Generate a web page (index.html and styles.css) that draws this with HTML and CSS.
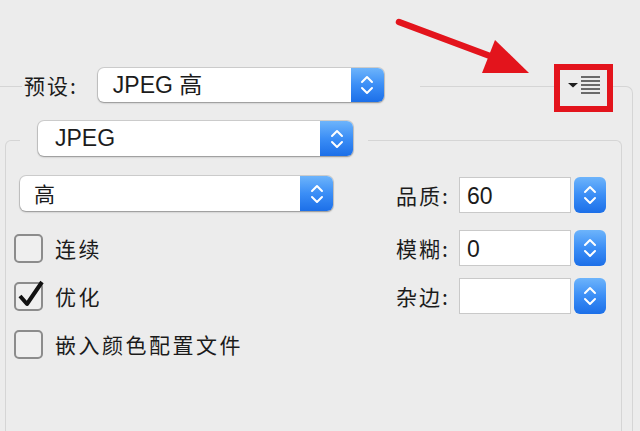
FILE: index.html
```html
<!DOCTYPE html>
<html lang="zh-CN">
<head>
    <meta charset="UTF-8">
    <meta name="viewport" content="width=device-width, initial-scale=1.0">
    <title>存储为 Web 所用格式</title>
    <link rel="stylesheet" href="styles.css">
</head>
<body>
    <div class="window">
        <div class="outer">
            <div class="preset-row">
                <span class="label">预设:</span>
                <div class="popup-wrap">
                    <div class="popup popup-preset">
                        <span class="popup-text">JPEG 高</span>
                        <span class="stepper">
                            <svg width="14" height="22" viewBox="0 0 14 22"><path d="M2 8 L7 3 L12 8 M2 14 L7 19 L12 14" fill="none" stroke="#fff" stroke-width="2" stroke-linecap="round" stroke-linejoin="round"/></svg>
                        </span>
                    </div>
                </div>
                <div class="menu-btn">
                    <svg width="34" height="20" viewBox="0 0 34 20"><path d="M0 8 L10 8 L5 12.5 Z" fill="#1e1e1e"/><path d="M13 2 H32 M13 6 H32 M13 10 H32 M13 14 H32 M13 18 H32" stroke="#6a6a6a" stroke-width="2"/></svg>
                </div>
            </div>

            <div class="inner">
                <div class="inner-head">
                    <div class="popup popup-format">
                        <span class="popup-text">JPEG</span>
                        <span class="stepper">
                            <svg width="14" height="22" viewBox="0 0 14 22"><path d="M2 8 L7 3 L12 8 M2 14 L7 19 L12 14" fill="none" stroke="#fff" stroke-width="2" stroke-linecap="round" stroke-linejoin="round"/></svg>
                        </span>
                    </div>
                </div>

                <div class="inner-body">
                    <div class="left-col">
                        <div class="popup popup-quality">
                            <span class="popup-text cjk">高</span>
                            <span class="stepper">
                                <svg width="14" height="22" viewBox="0 0 14 22"><path d="M2 8 L7 3 L12 8 M2 14 L7 19 L12 14" fill="none" stroke="#fff" stroke-width="2" stroke-linecap="round" stroke-linejoin="round"/></svg>
                            </span>
                        </div>
                        <div class="check-list">
                            <label class="check-row"><span class="box"></span>连续</label>
                            <label class="check-row"><span class="box">
                                <svg class="tick" width="34" height="30" viewBox="0 0 34 30"><path d="M6 14 L13 22 L28 0" fill="none" stroke="#111" stroke-width="4" stroke-linejoin="round"/></svg>
                            </span>优化</label>
                            <label class="check-row"><span class="box"></span>嵌入颜色配置文件</label>
                        </div>
                    </div>

                    <div class="right-col">
                        <div class="field-row">
                            <span class="field-label">品质:</span>
                            <span class="field">60</span>
                            <span class="stepper solo">
                                <svg width="14" height="22" viewBox="0 0 14 22"><path d="M2 8 L7 3 L12 8 M2 14 L7 19 L12 14" fill="none" stroke="#fff" stroke-width="2" stroke-linecap="round" stroke-linejoin="round"/></svg>
                            </span>
                        </div>
                        <div class="field-row">
                            <span class="field-label">模糊:</span>
                            <span class="field">0</span>
                            <span class="stepper solo">
                                <svg width="14" height="22" viewBox="0 0 14 22"><path d="M2 8 L7 3 L12 8 M2 14 L7 19 L12 14" fill="none" stroke="#fff" stroke-width="2" stroke-linecap="round" stroke-linejoin="round"/></svg>
                            </span>
                        </div>
                        <div class="field-row">
                            <span class="field-label">杂边:</span>
                            <span class="field"></span>
                            <span class="stepper solo">
                                <svg width="14" height="22" viewBox="0 0 14 22"><path d="M2 8 L7 3 L12 8 M2 14 L7 19 L12 14" fill="none" stroke="#fff" stroke-width="2" stroke-linecap="round" stroke-linejoin="round"/></svg>
                            </span>
                        </div>
                    </div>
                </div>
            </div>
        </div>

        <!-- annotation drawn over the panel -->
        <svg class="arrow" width="640" height="120" viewBox="0 0 640 120">
            <line x1="399" y1="22" x2="498" y2="59" stroke="#e3141c" stroke-width="6.5" stroke-linecap="round"/>
            <polygon points="482,73 495,40 529,73" fill="#e3141c"/>
        </svg>
        <div class="highlight"></div>
    </div>
</body>
</html>
```

FILE: styles.css
```css
* { box-sizing: border-box; }
body { margin: 0; background: #ececec; font-family: "Liberation Sans", "Noto Sans CJK SC", sans-serif; color: #1b1b1b; }
.window { position: relative; width: 640px; height: 431px; overflow: hidden; background: #ececec; }

.outer { margin: 86px 0 0 -10px; width: 643px; height: 420px; border: 1px solid #d5d5d5; border-bottom: none; border-radius: 0 7px 0 0; }
.preset-row { display: flex; align-items: center; height: 34px; margin-top: -19px; padding-left: 31px; }
.label { background: #ececec; padding: 0 20px 0 2px; font-family: "Noto Sans CJK SC", sans-serif; font-size: 21px; letter-spacing: 2px; line-height: 34px; }
.popup-wrap { background: #ececec; padding-right: 36px; }
.menu-btn { margin-left: auto; margin-right: 25px; width: 47px; height: 34px; background: #ececec; display: flex; align-items: center; justify-content: center; padding-left: 2px; }

.popup { display: flex; height: 34px; border-radius: 6px; background: #fff; box-shadow: 0 0 0 1px rgba(0, 0, 0, 0.12), 0 1px 2px rgba(0, 0, 0, 0.3); }
.popup-text { flex: 1; padding-left: 15px; font-size: 23px; line-height: 34px; white-space: pre; }
.popup-text.cjk { font-family: "Noto Sans CJK SC", sans-serif; font-size: 21px; }
.stepper { width: 33px; display: flex; align-items: center; justify-content: center; border-radius: 0 6px 6px 0; background: linear-gradient(#6db4fb, #3b8ef6 50%, #1c6fe8); }
.stepper.solo { width: 32px; height: 36px; border-radius: 6px; margin-left: 3px; }
.popup-preset { width: 286px; }
.popup-format { width: 315px; height: 35px; }
.popup-quality { width: 313px; height: 35px; }
.popup-format .popup-text, .popup-quality .popup-text { line-height: 35px; padding-left: 17px; }
.popup-quality .popup-text { padding-left: 14px; }

.inner { margin: 38px 0 0 14px; width: 617px; height: 320px; border: 1px solid #d5d5d5; border-bottom: none; border-radius: 6px 6px 0 0; }
.inner-head { display: flex; width: max-content; margin: -20px 0 0 14px; padding: 0 15px 0 18px; background: #ececec; }
.inner-body { display: flex; padding: 20px 0 0 14px; }
.left-col { width: 313px; }
.check-list { display: flex; flex-direction: column; gap: 18px; margin: 22px 0 0 -6px; }
.check-row { display: flex; align-items: center; height: 30px; font-family: "Noto Sans CJK SC", sans-serif; font-size: 21px; letter-spacing: 2.5px; }
.box { position: relative; width: 29px; height: 29px; margin-right: 12px; border: 2px solid #8c8c8c; border-radius: 5px; background: #efefef; }
.tick { position: absolute; left: -2px; top: -2px; overflow: visible; }

.right-col { display: flex; flex-direction: column; margin: 1px 0 0 63px; }
.field-row { display: flex; align-items: center; height: 36px; margin-bottom: 17px; }
.field-row + .field-row { margin-bottom: 0; margin-top: 0; }
.field-row:last-child { margin-top: 12px; }
.field-label { width: 63px; font-family: "Noto Sans CJK SC", sans-serif; font-size: 21px; letter-spacing: 2px; }
.field { width: 112px; height: 36px; padding-left: 7px; border: 1px solid #c9c9c9; background: #fff; font-size: 23px; line-height: 36px; }

.arrow { position: absolute; left: 0; top: 0; pointer-events: none; }
.highlight { position: absolute; left: 554px; top: 64px; width: 59px; height: 48px; border: 6px solid #e3141c; }
```
